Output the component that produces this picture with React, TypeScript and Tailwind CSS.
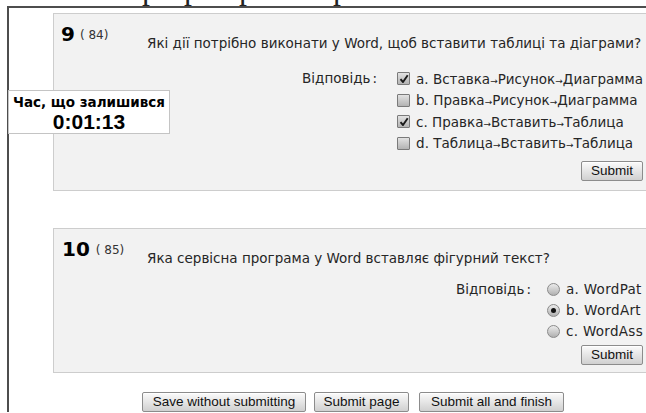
import React from "react";

const sans = { fontFamily: '"DejaVu Sans", Verdana, sans-serif' };
const arial = { fontFamily: '"Liberation Sans", Arial, sans-serif' };

function Btn({ label, className = "" }: { label: string; className?: string }) {
  return (
    <button
      className={`h-[20px] rounded-[2px] border border-[#8c8c8c] bg-[linear-gradient(#fbfbfb,#d0d0d0)] text-[13.5px] leading-[18px] text-[#111] shadow-[inset_0_1px_0_#fff] ${className}`}
      style={arial}
    >
      {label}
    </button>
  );
}

function Check({ on }: { on: boolean }) {
  return (
    <span className="flex h-[13px] w-[13px] shrink-0 items-center justify-center rounded-[1px] border border-[#7a7a7a] bg-[linear-gradient(#e2e2e2,#b3b3b3)]">
      {on && (
        <svg width="10" height="10" viewBox="0 0 10 10">
          <path d="M1.5 5.2 L4 8 L8.7 1.2" fill="none" stroke="#1a1a1a" strokeWidth="1.9" strokeLinejoin="round" />
        </svg>
      )}
    </span>
  );
}

function Radio({ on }: { on: boolean }) {
  return (
    <span className="flex h-[13px] w-[13px] shrink-0 items-center justify-center rounded-full border border-[#8a8a8a] bg-[linear-gradient(#ebebeb,#b0b0b0)]">
      {on && <span className="h-[5px] w-[5px] rounded-full bg-[#111]" />}
    </span>
  );
}

function Arrowed({ parts }: { parts: string[] }) {
  return (
    <>
      {parts.map((p, i) => (
        <React.Fragment key={i}>
          {i > 0 && <span className="text-[9px]">→</span>}
          {p}
        </React.Fragment>
      ))}
    </>
  );
}

function Label() {
  return (
    <span className="whitespace-nowrap">
      Відповідь<span className="ml-[2px]">:</span>
    </span>
  );
}

export default function App() {
  const q1 = [
    { l: "a", on: true, p: ["Вставка", "Рисунок", "Диаграмма"] },
    { l: "b", on: false, p: ["Правка", "Рисунок", "Диаграмма"] },
    { l: "c", on: true, p: ["Правка", "Вставить", "Таблица"] },
    { l: "d", on: false, p: ["Таблица", "Вставить", "Таблица"] },
  ];
  const q2 = [
    { l: "a", on: false, t: "WordPat" },
    { l: "b", on: true, t: "WordArt" },
    { l: "c", on: false, t: "WordAss" },
  ];

  return (
    <div className="relative h-[413px] w-[646px] overflow-hidden bg-white text-[#262626]" style={sans}>
      {/* tail of the heading line above */}
      <div className="h-[6px] overflow-hidden">
        <div
          className="mt-[-28px] flex whitespace-nowrap text-[32px] leading-[32px] text-[#222]"
          style={{ fontFamily: '"Liberation Serif", "Times New Roman", serif' }}
        >
          <span className="ml-[142px]">р</span>
          <span className="ml-[26px]">р</span>
          <span className="ml-[39px]">р</span>
          <span className="ml-[78px]">р</span>
        </div>
      </div>

      {/* page frame */}
      <div className="ml-[7px] w-[700px] border-l-2 border-t-2 border-[#4d4d4d] pl-[44px] pt-[5px]">
        {/* question 9 */}
        <div className="flex h-[178px] w-[600px] border border-[#cdcdcd] bg-[#f2f2f2] pr-[9px] pt-[8px]">
          <div className="flex w-[93px] shrink-0 items-start pl-[7px] whitespace-nowrap">
            <span className="text-[20px] font-bold leading-[24px] text-black">9</span>
            <span className="ml-[5px] mt-[5px] text-[12px] leading-[16px] text-[#333]">( 84)</span>
          </div>
          <div className="flex flex-1 flex-col">
            <div className="mt-[13px] whitespace-nowrap text-[13.5px] leading-[16px]">
              Які дії потрібно виконати у Word, щоб вставити таблиці та діаграми?
            </div>
            <div className="mt-[17px] flex justify-end text-[13.5px]">
              <div className="h-[21.5px] leading-[21.5px]">
                <Label />
              </div>
              <div className="ml-[20px] flex flex-col">
                {q1.map((o) => (
                  <div key={o.l} className="flex h-[21.5px] items-center whitespace-nowrap">
                    <Check on={o.on} />
                    <span className="ml-[6px]">
                      {o.l}. <Arrowed parts={o.p} />
                    </span>
                  </div>
                ))}
              </div>
            </div>
            <div className="mt-[7px] flex justify-end">
              <Btn label="Submit" className="w-[62px]" />
            </div>
          </div>
        </div>

        {/* question 10 */}
        <div className="mt-[37px] flex h-[145px] w-[600px] border border-[#cdcdcd] bg-[#f2f2f2] pr-[9px] pt-[8px]">
          <div className="flex w-[93px] shrink-0 items-start pl-[8px] whitespace-nowrap">
            <span className="text-[20px] font-bold leading-[24px] text-black">10</span>
            <span className="ml-[6px] mt-[5px] text-[12px] leading-[16px] text-[#333]">( 85)</span>
          </div>
          <div className="flex flex-1 flex-col">
            <div className="mt-[13px] whitespace-nowrap text-[13.5px] leading-[16px]">
              Яка сервісна програма у Word вставляє фігурний текст?
            </div>
            <div className="mt-[13px] flex justify-end text-[13.5px]">
              <div className="h-[21px] leading-[21px]">
                <Label />
              </div>
              <div className="ml-[16px] flex flex-col">
                {q2.map((o) => (
                  <div key={o.l} className="flex h-[21px] items-center whitespace-nowrap">
                    <Radio on={o.on} />
                    <span className="ml-[6px] tracking-[0.3px]">
                      {o.l}. {o.t}
                    </span>
                  </div>
                ))}
              </div>
            </div>
            <div className="mt-[3px] flex justify-end">
              <Btn label="Submit" className="w-[62px]" />
            </div>
          </div>
        </div>

        <div className="ml-[89px] mt-[19px] flex">
          <Btn label="Save without submitting" className="w-[164px]" />
          <Btn label="Submit page" className="ml-[8px] w-[95px]" />
          <Btn label="Submit all and finish" className="ml-[10px] w-[145px]" />
        </div>
      </div>

      {/* remaining-time block */}
      <div className="absolute left-[8px] top-[90px] flex h-[44px] w-[162px] flex-col items-center border border-[#c4c4c4] bg-white pt-[2px] font-bold text-black">
        <div className="text-[13.5px] leading-[18px]">Час, що залишився</div>
        <div className="text-[21px] leading-[22px]" style={arial}>
          0:01:13
        </div>
      </div>
    </div>
  );
}
